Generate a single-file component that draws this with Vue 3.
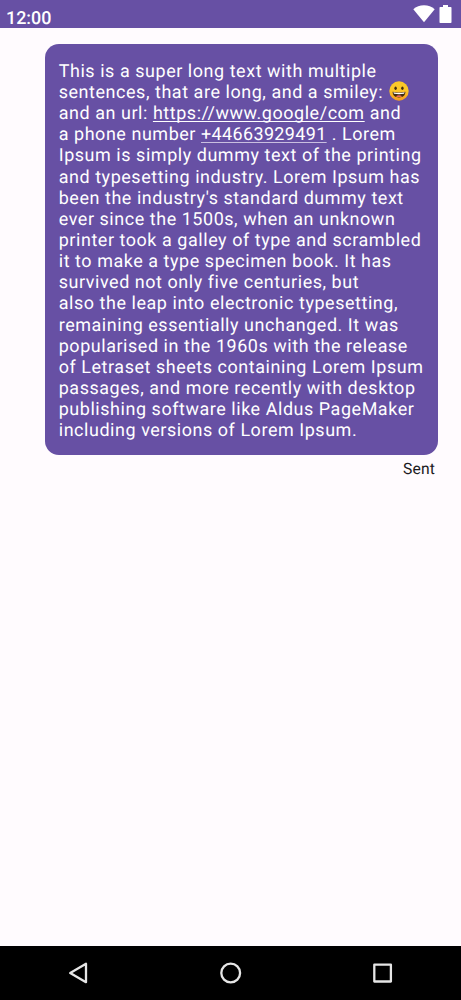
<script setup>
const rest = [
  'Ipsum is simply dummy text of the printing',
  'and typesetting industry. Lorem Ipsum has',
  "been the industry's standard dummy text",
  'ever since the 1500s, when an unknown',
  'printer took a galley of type and scrambled',
  'it to make a type specimen book. It has',
  'survived not only five centuries, but',
  'also the leap into electronic typesetting,',
  'remaining essentially unchanged. It was',
  'popularised in the 1960s with the release',
  'of Letraset sheets containing Lorem Ipsum',
  'passages, and more recently with desktop',
  'publishing software like Aldus PageMaker',
  'including versions of Lorem Ipsum.',
]
</script>

<template>
  <div class="screen">
    <header class="status">
      <span class="clock">12:00</span>
      <svg class="wifi" width="22" height="18" viewBox="0 0 22 18"><path d="M11 17.200 .3 4.300C3 1.500 7 .2 11 .2s8 1.300 10.700 4.100z" fill="#fff" /></svg>
      <svg class="battery" width="13" height="18" viewBox="0 0 13 18"><path d="M4 0h5v2h2.700q.8 0 .8.800v14.400q0 .8-.8.800H1.300q-.8 0-.8-.8V2.800q0-.8.8-.8H4z" fill="#fff" /></svg>
    </header>
    <main class="chat">
      <div class="bubble">
        <div class="line">This is a super long text with multiple</div>
        <div class="line">sentences, that are long, and a smiley:
          <svg class="smiley" width="20" height="20" viewBox="0 0 20 20">
            <defs>
              <linearGradient id="face" x1="0" y1="0" x2="0" y2="1">
                <stop offset=".45" stop-color="#fcc828" />
                <stop offset="1" stop-color="#f39a20" />
              </linearGradient>
            </defs>
            <circle cx="10" cy="10" r="9.700" fill="url(#face)" />
            <ellipse cx="6.600" cy="7.200" rx="1.200" ry="1.700" fill="#422b0d" />
            <ellipse cx="13.400" cy="7.200" rx="1.200" ry="1.700" fill="#422b0d" />
            <path d="M3.600 10.800q6.400 1.400 12.800 0c0 3.700-2.700 5.700-6.400 5.700s-6.400-2-6.400-5.700z" fill="#422b0d" />
            <path d="M4.300 11.200q5.700 1.100 11.400 0l-.7 1.500q-5 .9-10 0z" fill="#fff" />
            <path d="M6.700 15.200q3.300-2 6.600 0-3.300 1.800-6.600 0z" fill="#ed6c5a" />
          </svg>
        </div>
        <div class="line">and an url: <u>https://www.google/com</u> and</div>
        <div class="line">a phone number <u class="phone">+44663929491</u> . Lorem</div>
        <div v-for="line in rest" :key="line" class="line">{{ line }}</div>
      </div>
      <div class="sent">Sent</div>
    </main>
    <nav class="nav">
      <svg width="24" height="24" viewBox="0 0 24 24"><path d="M19 2.800v18.400L3.200 12z" /></svg>
      <svg width="24" height="24" viewBox="0 0 24 24"><circle cx="11.700" cy="12" r="9.400" /></svg>
      <svg width="24" height="24" viewBox="0 0 24 24"><rect x="3.300" y="3.700" width="16.600" height="16.800" /></svg>
    </nav>
  </div>
</template>

<style scoped>
.screen { width: 461px; height: 1000px; display: flex; flex-direction: column; background: #fffbfe; font-family: Roboto, sans-serif; text-rendering: geometricPrecision; }
.status { height: 28px; box-sizing: border-box; background: #6750a4; display: flex; align-items: flex-start; padding: 5px 9px 0 6px; color: #fff; }
.clock { flex: 1; font-size: 17.900px; line-height: 28px; margin-bottom: -5px; font-weight: 500; }
.battery { margin-left: 4px; }
.chat { flex: 1; display: flex; flex-direction: column; align-items: flex-end; padding: 16px 22.600px 0 0; }
.bubble { width: 393.700px; height: 411px; box-sizing: border-box; padding: 16.900px 13.800px 0 14px; border-radius: 14px; background: #6750a4; color: #fff; font-size: 17.950px; letter-spacing: .56px; }
.line { height: 21.150px; line-height: 21.150px; white-space: nowrap; }
.smiley { vertical-align: -3px; margin: -1px 0 0 1px; }
u { text-decoration-thickness: 1px; text-underline-offset: 2px; text-decoration-skip-ink: none; }
.phone { letter-spacing: .38px; text-decoration-color: #c9bfe0; }
.sent { font-size: 15.700px; line-height: 20px; margin: 3.500px 3.300px 0 0; color: #1c1b1f; letter-spacing: .15px; }
.nav { height: 54px; background: #000; display: flex; justify-content: center; align-items: center; gap: 128px; }
.nav svg { fill: none; stroke: #e6e6e6; stroke-width: 2.300; stroke-linejoin: round; }
</style>

<style>
body { margin: 0; }
</style>
